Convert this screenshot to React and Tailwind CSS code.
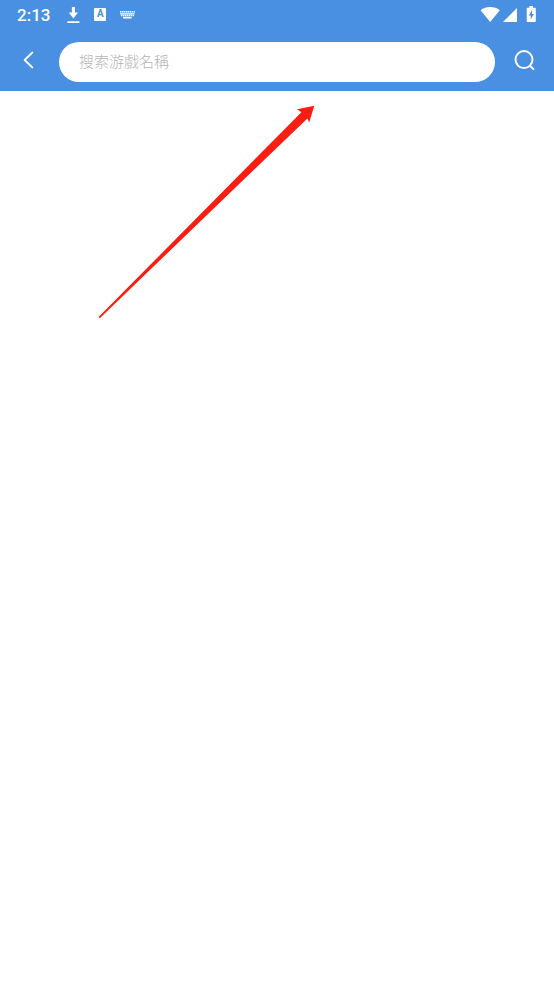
import { useState } from 'react';

function DownloadIcon() {
  return (
    <svg viewBox="0 0 14 18" className="w-[14px] h-[18px]" fill="currentColor" aria-hidden="true">
      <path d="M5.9 2h3v5.6H12L7.4 13.4 2.8 7.6h3.1zM1.4 16.2h12v1.8h-12z" />
    </svg>
  );
}

function LetterBoxIcon() {
  return (
    <span className="flex h-[13px] w-3 items-center justify-center rounded-[1px] bg-white text-[10px] leading-3 font-bold text-[#4a90e2]">
      A
    </span>
  );
}

function KeyboardIcon() {
  return (
    <svg viewBox="0 0 16 10" className="w-4 h-[10px]" aria-hidden="true">
      <path
        d="M0 2.8h15M0.3 4.7h14.4M0.9 6.6h13.2"
        fill="none"
        stroke="currentColor"
        strokeWidth="1.5"
        strokeDasharray="1.5 0.5"
      />
      <path d="M3 7.8h8.6v1.7H3z" fill="currentColor" />
    </svg>
  );
}

function StatusBar() {
  return (
    <div className="flex h-8 items-start justify-between pl-[17px] pr-[18px]">
      <div className="flex items-start">
        <span className="text-[17px] leading-[30px] font-medium">2:13</span>
        <div className="flex h-7 items-center gap-[14px] pl-4">
          <DownloadIcon />
          <LetterBoxIcon />
          <KeyboardIcon />
        </div>
      </div>
      <div className="flex h-7 items-center gap-[2px]">
        <svg viewBox="0 0 20 16" className="w-5 h-4" fill="currentColor" aria-hidden="true">
          <path d="M10.2 16L0.6 4.3C3.2 2 6.5 1 10.2 1s7 1 9.6 3.3z" />
        </svg>
        <svg viewBox="0 0 15 16" className="w-[15px] h-4" fill="currentColor" aria-hidden="true">
          <path d="M15 2v14H1z" />
        </svg>
        <svg viewBox="0 0 10 16" className="ml-[7px] w-[10px] h-4" aria-hidden="true">
          <path d="M3.4 0h3.5v1.7H8.8c.6 0 1 .4 1 1V15c0 .6-.4 1-1 1H1.7c-.6 0-1-.4-1-1V2.7c0-.6.4-1 1-1h1.7z" fill="currentColor" />
          <path d="M6 4.1L2.8 9.5h1.9v4L7.9 8H6z" fill="#4a90e2" />
        </svg>
      </div>
    </div>
  );
}

export default function App() {
  const [keyword, setKeyword] = useState('');

  return (
    <div className="min-h-screen bg-white font-[Roboto,'Noto_Sans_CJK_TC',sans-serif]">
      <header className="bg-[#4a90e2] text-white">
        <StatusBar />
        <form className="flex items-start pt-[10px] pb-[9px]" onSubmit={(e) => e.preventDefault()}>
          <button type="button" aria-label="返回" className="flex h-9 w-[59px] shrink-0 items-center justify-center pr-[2px]">
            <svg viewBox="0 0 12 18" className="w-3 h-[18px]" fill="none" stroke="currentColor" strokeWidth="1.8" strokeLinecap="round" strokeLinejoin="round" aria-hidden="true">
              <path d="M9.4 1.5L1.6 9l7.8 7.5" />
            </svg>
          </button>
          <input
            type="text"
            aria-label="搜索游戲名稱"
            placeholder="搜索游戲名稱"
            value={keyword}
            onChange={(e) => setKeyword(e.target.value)}
            className="h-10 min-w-0 flex-1 rounded-full bg-white px-5 text-[15px] font-light text-gray-800 placeholder:text-[#b4b4b4] outline-none"
          />
          <button type="submit" aria-label="搜索" className="flex h-9 w-[59px] shrink-0 items-center justify-center">
            <svg viewBox="0 0 22 22" className="w-[22px] h-[22px]" fill="none" stroke="currentColor" strokeWidth="2" strokeLinecap="round" aria-hidden="true">
              <circle cx="10" cy="10.6" r="8.5" />
              <path d="M16.2 17l3.2 3" />
            </svg>
          </button>
        </form>
      </header>
      <main className="pt-[14px] pl-[98px]">
        <svg viewBox="0 0 217 214" className="w-[217px] h-[214px]" fill="#fb1d12" aria-hidden="true">
          <path d="M216.3 0.8L199.2 4.2L203.4 7.2L0.6 212L1.8 213.2L209.4 13.4L211.2 17.4Z" />
        </svg>
      </main>
    </div>
  );
}
